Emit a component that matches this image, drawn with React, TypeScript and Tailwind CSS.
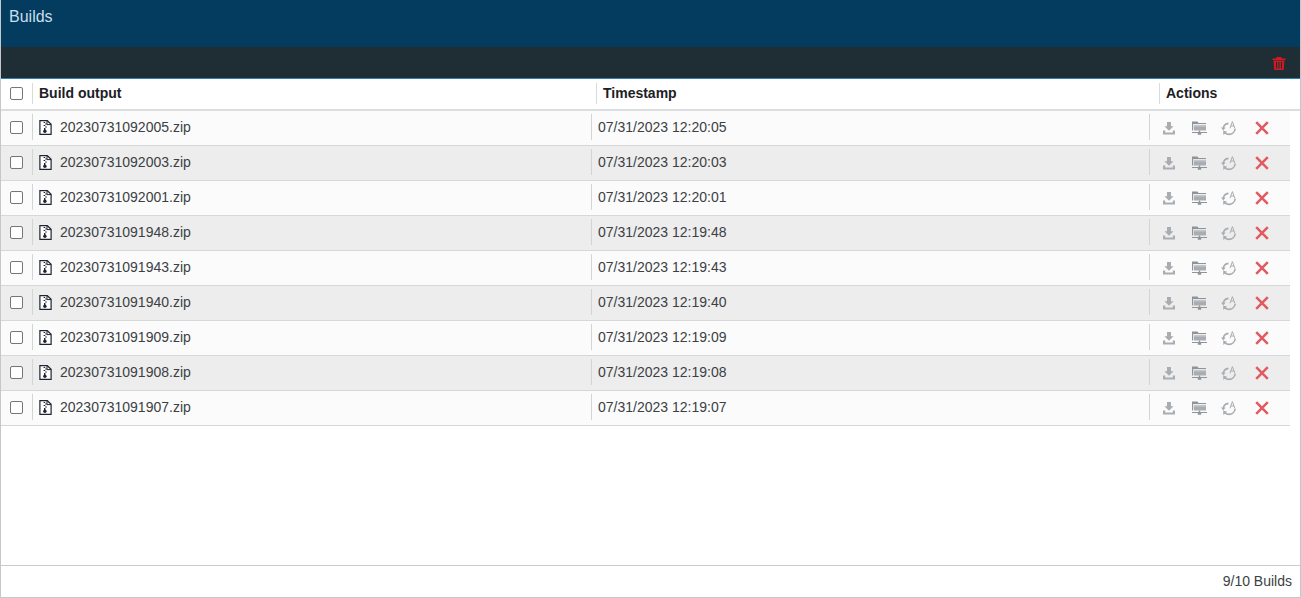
import React from "react";

const builds = [
  { name: "20230731092005.zip", time: "07/31/2023 12:20:05" },
  { name: "20230731092003.zip", time: "07/31/2023 12:20:03" },
  { name: "20230731092001.zip", time: "07/31/2023 12:20:01" },
  { name: "20230731091948.zip", time: "07/31/2023 12:19:48" },
  { name: "20230731091943.zip", time: "07/31/2023 12:19:43" },
  { name: "20230731091940.zip", time: "07/31/2023 12:19:40" },
  { name: "20230731091909.zip", time: "07/31/2023 12:19:09" },
  { name: "20230731091908.zip", time: "07/31/2023 12:19:08" },
  { name: "20230731091907.zip", time: "07/31/2023 12:19:07" },
];

const Check = () => (
  <span className="block h-[13px] w-[13px] rounded-[2px] border border-[#767676] bg-white" />
);

const ZipIcon = () => (
  <svg width="13" height="15" viewBox="0 0 13 15" fill="none" className="shrink-0">
    <path d="M.9.7h7.4l3.8 3.6v10H.9z" fill="#fff" stroke="#1f2430" strokeWidth="1.2" />
    <path d="M8 1v3.6h4" stroke="#1f2430" />
    <path d="M4.6 2.5h1.6M6.2 4h1.6M4.6 5.5h1.6M6.2 7h1.6" stroke="#1f2430" />
    <path d="M5.7 8v2" stroke="#1f2430" strokeWidth="1.4" />
    <circle cx="5.9" cy="11.3" r="1.7" fill="#1f2430" />
  </svg>
);

const DownloadIcon = () => (
  <svg width="14" height="14" viewBox="0 0 14 14" fill="#a9adb2">
    <path d="M5 1h4v4.2h2.6L7 9.8 2.4 5.2H5z" />
    <path d="M1 9.5h2.2v2h7.6v-2H13V13.5H1z" />
  </svg>
);

const FolderIcon = () => (
  <svg width="15" height="15" viewBox="0 0 15 15" fill="#a9adb2">
    <path d="M0 .5h5.4L6.6 2H14v1H1.2v6.5H0z" fill="#8f9499" />
    <path d="M2 3.8h12v1.4H2z" fill="#c3c6c9" />
    <path d="M2 5.2h12v4.3H2z" />
    <path d="M6.8 9.5h1.4v1.6h6.8v1H9.2v1.6H5.8v-1.6H0v-1h6.8z" fill="#8f9499" />
  </svg>
);

const RefreshIcon = () => (
  <svg width="16" height="16" viewBox="0 0 16 16" fill="none" stroke="#a9adb2">
    <path d="M7.5 3.4C4.7 3.7 2.6 5.7 2.3 8.4" strokeWidth="1.6" />
    <path d="M14.2 8.6c-.4 3.4-3 5.8-6.2 5.8-1.6 0-3-.6-4-1.6" strokeWidth="1.6" />
    <path d="M0 7.4h4.6L2.3 10.6zM2.2 10.6l4 1.2-3.9 3.2z" fill="#a9adb2" stroke="none" />
    <path d="M9 8.2 11.4 1.6l2.4 6.6M9.8 6h3.2" strokeWidth="1" />
  </svg>
);

const DeleteIcon = () => (
  <svg width="14" height="14" viewBox="0 0 14 14" fill="none" stroke="#e05a60" strokeWidth="2.5">
    <path d="M1.2 1.2 12.8 12.8M12.8 1.2 1.2 12.8" />
  </svg>
);

const TrashIcon = () => (
  <svg width="14" height="13" viewBox="0 0 14 13" fill="#cf1a24">
    <path d="M4.7 0h4.6l.6 1.4h3.6v1.7H.5V1.4h3.6z" />
    <path d="M1.5 3.6h11l-.8 9.4H2.3zM4 5v6.5h1.1V5zm2.4 0v6.5h1.1V5zm2.5 0v6.5H10V5z" fillRule="evenodd" />
  </svg>
);

export default function App() {
  return (
    <div className="flex h-[598px] w-[1301px] flex-col overflow-hidden border border-t-0 border-[#c4c7cb] bg-white font-['Liberation_Sans',Arial,sans-serif] text-sm text-[#3c3f44]">
      {/* Title */}
      <div className="h-[47px] shrink-0 bg-[#033c5e] px-2 pt-[7px] text-base leading-[20px] text-[#c9dfee]">
        Builds
      </div>

      {/* Toolbar */}
      <div className="flex h-[32px] shrink-0 items-center justify-end border-b border-[#2f7fb0] bg-[#1f2d35] pr-[14px] pt-[1px]">
        <TrashIcon />
      </div>

      {/* Table head */}
      <div className="flex h-[32px] shrink-0 items-center border-b-2 border-[#dcdddf] pb-[1px] font-bold text-[#1d2026]">
        <div className="flex h-[21px] w-[31px] shrink-0 items-center pl-[9px]">
          <Check />
        </div>
        <div className="flex h-[21px] w-[564px] shrink-0 items-center border-l border-[#d8dadc] pb-[1px] pl-[6px]">Build output</div>
        <div className="flex h-[21px] w-[563px] shrink-0 items-center border-l border-[#d8dadc] pb-[1px] pl-[6px]">Timestamp</div>
        <div className="flex h-[21px] flex-1 items-center border-l border-[#d8dadc] pb-[1px] pl-[6px]">Actions</div>
      </div>

      {/* Rows */}
      <div className="flex-1">
        {builds.map((b, i) => (
          <div
            key={b.name}
            className={`flex h-[35px] w-[1289px] items-center border-b border-[#d6d7d9] pb-[2px] ${
              i % 2 === 0 ? "bg-[#fbfbfb]" : "bg-[#ededed]"
            }`}
          >
            <div className="flex h-[26px] w-[31px] shrink-0 items-center pl-[9px]">
              <Check />
            </div>
            <div className="flex h-[26px] w-[559px] shrink-0 items-center gap-[8px] border-l border-[#d2d4d6] pl-[6px]">
              <ZipIcon />
              <span>{b.name}</span>
            </div>
            <div className="flex h-[26px] w-[558px] shrink-0 items-center border-l border-[#d2d4d6] pl-[6px]">
              {b.time}
            </div>
            <div className="flex h-[26px] flex-1 items-center border-l border-[#d2d4d6] pl-[12px] pt-[2px]">
              <span className="flex w-[30px]"><DownloadIcon /></span>
              <span className="flex w-[29px]"><FolderIcon /></span>
              <span className="flex w-[34px]"><RefreshIcon /></span>
              <DeleteIcon />
            </div>
          </div>
        ))}
      </div>

      {/* Footer */}
      <div className="flex h-[32px] shrink-0 items-center justify-end border-t border-[#c9cbce] pb-[1px] pr-[8px]">
        9/10 Builds
      </div>
    </div>
  );
}
